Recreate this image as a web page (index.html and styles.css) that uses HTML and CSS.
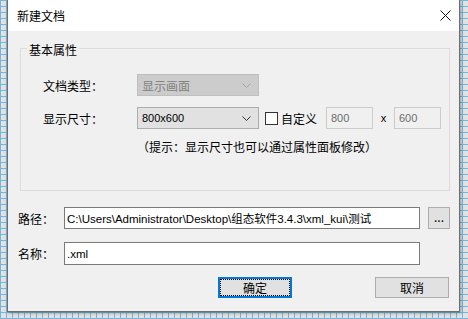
FILE: index.html
```html
<!DOCTYPE html>
<html lang="zh-CN">
<head>
    <meta charset="UTF-8">
    <meta name="viewport" content="width=device-width, initial-scale=1.0">
    <title>新建文档</title>
    <link rel="stylesheet" href="styles.css">
</head>
<body>

<div class="dialog">
    <div class="titlebar">
        <span class="title">新建文档</span>
        <svg class="close" width="11" height="11" viewBox="0 0 11 11">
            <path d="M0.5 0.5L10.5 10.5M10.5 0.5L0.5 10.5" stroke="#111" stroke-width="1" fill="none"/>
        </svg>
    </div>

    <div class="content">
        <div class="group">
            <span class="legend">基本属性</span>

            <div class="field">
                <span class="label">文档类型：</span>
                <div class="combo disabled">
                    <span>显示画面</span>
                    <svg class="chevron" width="9" height="5" viewBox="0 0 9 5"><path d="M0.5 0.5L4.5 4.5L8.5 0.5" stroke="currentColor" fill="none"/></svg>
                </div>
            </div>

            <div class="field second">
                <span class="label">显示尺寸：</span>
                <div class="combo">
                    <span>800x600</span>
                    <svg class="chevron" width="9" height="5" viewBox="0 0 9 5"><path d="M0.5 0.5L4.5 4.5L8.5 0.5" stroke="currentColor" fill="none"/></svg>
                </div>
                <label class="check"><span class="box"></span>自定义</label>
                <input class="size-input" type="text" value="800" disabled>
                <span class="times">x</span>
                <input class="size-input" type="text" value="600" disabled>
            </div>

            <p class="hint">（提示：显示尺寸也可以通过属性面板修改）</p>
        </div>

        <div class="row">
            <span class="row-label">路径：</span>
            <input class="text-input" type="text" value="C:\Users\Administrator\Desktop\组态软件3.4.3\xml_kui\测试">
            <button class="browse">...</button>
        </div>

        <div class="row name-row">
            <span class="row-label">名称：</span>
            <input class="text-input" type="text" value=".xml">
        </div>

        <div class="actions">
            <button class="btn primary"><span>确定</span></button>
            <button class="btn"><span>取消</span></button>
        </div>
    </div>
</div>

</body>
</html>
```

FILE: styles.css
```css
body {
    margin: 0;
    font-family: "Noto Sans CJK SC", "Liberation Sans", sans-serif;
    font-size: 12px;
    color: #000;
    background-color: #e2e2e2;
    background-image:
        linear-gradient(to right, #72b8de 1px, transparent 1px),
        linear-gradient(to bottom, #72b8de 1px, transparent 1px);
    background-size: 6px 6px;
    height: 319px;
    overflow: hidden;
}
.dialog {
    margin-left: 7px;
    width: 453px;
    height: 312px;
    box-sizing: border-box;
    border: 1px solid #6e6e6e;
    border-top: none;
    background-color: #f0f0f0;
    box-shadow: 1px 1px 3px rgba(0, 0, 0, 0.35);
    display: flex;
    flex-direction: column;
}
.titlebar {
    height: 31px;
    background-color: #fff;
    display: flex;
    align-items: center;
    justify-content: space-between;
    padding: 0 8px 0 9px;
    flex-shrink: 0;
}
.title {
    line-height: 17px;
}
.close {
    display: block;
    margin-top: -1px;
}
.content {
    padding: 17px 9px 0 10px;
}
.group {
    position: relative;
    margin-left: 2px;
    width: 430px;
    height: 143px;
    box-sizing: border-box;
    border: 1px solid #dcdcdc;
    padding: 25px 0 0 22px;
}
.legend {
    position: absolute;
    top: -8px;
    left: 6px;
    padding: 0 2px;
    line-height: 17px;
    background-color: #f0f0f0;
}
.field {
    display: flex;
    align-items: center;
    height: 22px;
}
.field.second {
    margin-top: 11px;
}
.label {
    width: 94px;
    flex-shrink: 0;
}
.combo {
    width: 122px;
    height: 22px;
    box-sizing: border-box;
    border: 1px solid #adadad;
    background-color: #e1e1e1;
    display: flex;
    align-items: center;
    justify-content: space-between;
    padding: 0 7px 0 4px;
    color: #000;
    font-family: "Liberation Sans", "Noto Sans CJK SC", sans-serif;
    font-size: 11px;
}
.combo.disabled {
    background-color: #cccccc;
    border-color: #bfbfbf;
    color: #838383;
    font-family: "Noto Sans CJK SC", sans-serif;
    font-size: 12px;
}
.combo .chevron {
    color: #333;
}
.combo.disabled .chevron {
    color: #a6a6a6;
}
.check {
    display: flex;
    align-items: center;
    width: 61px;
    margin-left: 6px;
    flex-shrink: 0;
}
.box {
    width: 13px;
    height: 13px;
    box-sizing: border-box;
    border: 1px solid #333;
    background-color: #fff;
    margin-right: 3px;
}
.size-input {
    width: 47px;
    height: 22px;
    box-sizing: border-box;
    border: 1px solid #cccccc;
    background-color: #f0f0f0;
    color: #6d6d6d;
    font-family: "Liberation Sans", sans-serif;
    font-size: 11px;
    padding: 0 4px;
    margin: 0;
}
.times {
    width: 21px;
    text-align: center;
    font-family: "Liberation Sans", sans-serif;
    font-size: 11px;
}
.hint {
    margin: 9px 0 0 94px;
    line-height: 17px;
}
.row {
    display: flex;
    align-items: center;
    margin-top: 16px;
    height: 22px;
}
.row.name-row {
    margin-top: 13px;
    height: 23px;
}
.row-label {
    width: 46px;
    flex-shrink: 0;
}
.text-input {
    width: 356px;
    height: 100%;
    box-sizing: border-box;
    border: 1px solid #7a7a7a;
    background-color: #fff;
    font-family: "Liberation Sans", "Noto Sans CJK SC", sans-serif;
    font-size: 11.5px;
    color: #000;
    padding: 0 2px;
    margin: 0;
}
.browse {
    margin: 0 0 0 8px;
    width: 22px;
    height: 22px;
    padding: 0 0 3px 0;
    box-sizing: border-box;
    border: 1px solid #adadad;
    background-color: #e1e1e1;
    font: inherit;
    line-height: 1;
}
.actions {
    display: flex;
    gap: 83px;
    padding-left: 200px;
    margin-top: 12px;
}
.btn {
    width: 74px;
    height: 21px;
    box-sizing: border-box;
    border: 1px solid #adadad;
    background-color: #e1e1e1;
    font: inherit;
    padding: 0;
    margin: 0;
}
.btn span {
    display: block;
    line-height: 17px;
}
.btn.primary {
    border: 2px solid #0078d7;
}
.btn.primary span {
    height: 100%;
    box-sizing: border-box;
    border: 1px dotted #000;
    line-height: 15px;
}
```
